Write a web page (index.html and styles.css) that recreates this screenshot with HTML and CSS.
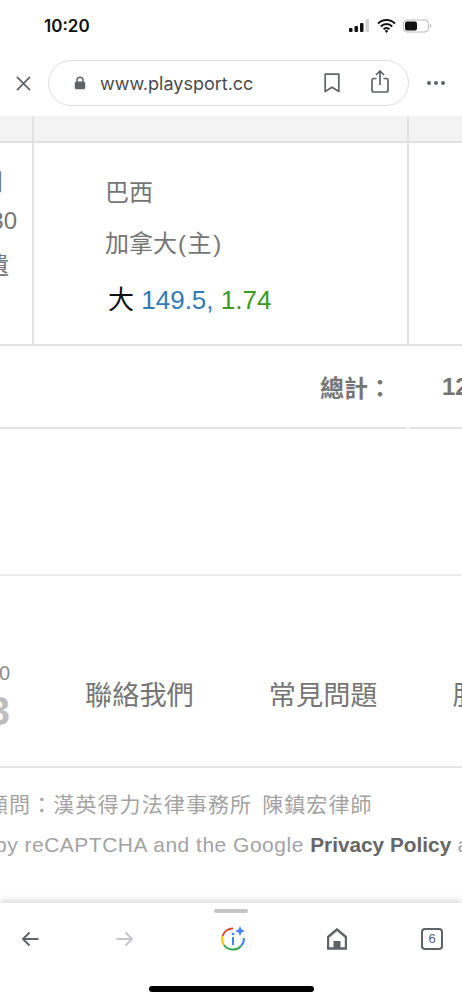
FILE: index.html
```html
<!DOCTYPE html>
<html lang="en">

<head>
  <meta charset="UTF-8">
  <meta name="viewport" content="width=device-width, initial-scale=1.0">
  <title>www.playsport.cc</title>
  <link rel="stylesheet" href="styles.css">
</head>

<body>
  <div class="phone">
    <!-- iOS status bar -->
    <div class="status-bar">
      <span class="clock">10:20</span>
      <div class="status-icons">
        <svg width="21" height="14" viewBox="0 0 21 14">
          <rect x="0" y="9" width="3.5" height="4" rx="1" fill="#111" />
          <rect x="5.5" y="7" width="3.5" height="6" rx="1" fill="#111" />
          <rect x="11" y="4" width="3.5" height="9" rx="1" fill="#111" />
          <rect x="16.5" y="0" width="3.5" height="13" rx="1" fill="#d4d4d4" />
        </svg>
        <svg width="19" height="14" viewBox="0 0 19 14">
          <path d="M1 4.6a12 12 0 0 1 17 0M3.8 7.5a8 8 0 0 1 11.4 0M6.6 10.2a4 4 0 0 1 5.8 0" fill="none" stroke="#111" stroke-width="2" />
          <path d="M9.5 14l-1.8-2.2a2.6 2.6 0 0 1 3.6 0z" fill="#111" />
        </svg>
        <svg width="29" height="14" viewBox="0 0 29 14">
          <rect x="0.5" y="1" width="25" height="12" rx="3.5" fill="none" stroke="#bbb" />
          <rect x="2" y="2.5" width="12" height="9" rx="2" fill="#111" />
          <path d="M27 5v4a2 2 0 0 0 1.2-2A2 2 0 0 0 27 5z" fill="#bbb" />
        </svg>
      </div>
    </div>

    <!-- browser address bar -->
    <div class="address-row">
      <svg class="close-icon" width="15" height="15" viewBox="0 0 16 16">
        <path d="M1 1l14 14M15 1L1 15" stroke="#5f6368" stroke-width="1.8" fill="none" />
      </svg>
      <div class="address-pill">
        <svg width="12" height="14" viewBox="0 0 12 14">
          <path d="M3 6V4.2a3 3 0 0 1 6 0V6" fill="none" stroke="#5f6368" stroke-width="1.5" />
          <rect x="0.8" y="5.5" width="10.4" height="7.8" rx="1.6" fill="#5f6368" />
        </svg>
        <span class="url">www.playsport.cc</span>
        <svg class="bookmark" width="16" height="20" viewBox="0 0 16 20">
          <path d="M1.2 1.2h13.6v17.3L8 14.2l-6.8 4.3z" fill="none" stroke="#5f6368" stroke-width="1.7" stroke-linejoin="round" />
        </svg>
        <svg class="share" width="18" height="23" viewBox="0 0 18 23">
          <path d="M5.5 8.5H3a2 2 0 0 0-2 2V20a2 2 0 0 0 2 2h12a2 2 0 0 0 2-2v-9.500a2 2 0 0 0-2-2h-2.500M9 15V1.500M5 5l4-4 4 4" fill="none" stroke="#5f6368" stroke-width="1.7" />
        </svg>
      </div>
      <div class="more-dots"><i></i><i></i><i></i></div>
    </div>

    <!-- page content, scrolled sideways -->
    <main class="page">
      <div class="table-row table-head">
        <div class="cell-left"></div>
        <div class="cell-mid"></div>
        <div class="cell-right"></div>
      </div>
      <div class="table-row table-body">
        <div class="cell-left clipped">
          <span class="date-line">日</span>
          <span class="time-line">30</span>
          <span class="result-line">遺</span>
        </div>
        <div class="cell-mid game">
          <div class="team">巴西</div>
          <div class="team">加拿大<span class="home-tag">(主)</span></div>
          <div class="odds"><span class="pick">大</span> <span class="line">149.5,</span> <span class="price">1.74</span></div>
        </div>
        <div class="cell-right"></div>
      </div>
      <div class="total-row">
        <span class="total-label">總計：</span>
        <span class="total-num">12</span>
      </div>
      <div class="blank-block"></div>
      <div class="footer-nav">
        <div class="visit-count">
          <span class="visit-small">0</span>
          <span class="visit-big">3</span>
        </div>
        <a class="nav-link">聯絡我們</a>
        <a class="nav-link">常見問題</a>
        <a class="nav-link">服務</a>
      </div>
      <div class="legal">
        <p class="legal-zh">顧問：漢英得力法律事務所 陳鎮宏律師</p>
        <p class="legal-en">by reCAPTCHA and the Google <b>Privacy Policy</b> and</p>
      </div>
    </main>

    <!-- browser bottom toolbar -->
    <footer class="toolbar">
      <div class="handle"></div>
      <div class="toolbar-icons">
        <svg width="18" height="16" viewBox="0 0 18 16">
          <path d="M17.500 8H2M8.500 1.500L2 8l6.500 6.500" fill="none" stroke="#5f6368" stroke-width="2" />
        </svg>
        <svg class="tool-forward" width="18" height="16" viewBox="0 0 18 16">
          <path d="M.5 8H16M9.500 1.500L16 8l-6.500 6.500" fill="none" stroke="#c6c7ca" stroke-width="2" />
        </svg>
        <svg class="tool-lens" width="26" height="26" viewBox="0 0 26 26">
          <path d="M13 2.500A11 11 0 0 0 2.500 10" fill="none" stroke="#ea4335" stroke-width="2" />
          <path d="M2.500 10A11 11 0 0 0 4 19" fill="none" stroke="#fbbc04" stroke-width="2" />
          <path d="M4 19a11 11 0 0 0 17 1" fill="none" stroke="#34a853" stroke-width="2" />
          <path d="M21 20a11 11 0 0 0 3-8" fill="none" stroke="#4285f4" stroke-width="2" />
          <path d="M20 0l1.500 3.500L25 5l-3.500 1.500L20 10l-1.500-3.500L15 5l3.500-1.500z" fill="#4285f4" />
          <rect x="12" y="11" width="2" height="8" fill="#4285f4" />
          <circle cx="13" cy="8" r="1.300" fill="#4285f4" />
        </svg>
        <svg class="tool-home" width="20" height="22" viewBox="0 0 20 22">
          <path d="M10 1.500L1 9v11.500h18V9z" fill="none" stroke="#5f6368" stroke-width="2.400" />
          <rect x="6.500" y="13" width="7" height="8" fill="#5f6368" />
        </svg>
        <div class="tab-count">6</div>
      </div>
      <div class="home-bar"></div>
    </footer>
  </div>
</body>

</html>
```

FILE: styles.css
```css
:root {
  --line-color: #e2e2e2;
  --text-gray: #757575;
  --icon-gray: #5f6368;
}

* {
  margin: 0;
  padding: 0;
  box-sizing: border-box;
}

body {
  background: #fff;
  font-family: "Liberation Sans", "Noto Sans CJK TC", sans-serif;
}

.phone {
  width: 462px;
  height: 1000px;
  display: flex;
  flex-direction: column;
  overflow: hidden;
}

/* status bar */
.status-bar {
  height: 58px;
  padding: 15px 27px 0 44px;
  display: flex;
  justify-content: space-between;
  align-items: flex-start;
}

.clock {
  font-family: Inter, sans-serif;
  font-size: 17px;
  line-height: 22px;
  font-weight: 600;
  color: #111;
}

.status-icons {
  display: flex;
  align-items: center;
  gap: 7px;
  padding: 4px 3px 0 0;
}

/* address bar */
.address-row {
  height: 58px;
  padding: 2px 0 0 16px;
  display: flex;
  align-items: flex-start;
}

.close-icon {
  margin: 16px 17px 0 0;
  flex-shrink: 0;
}

.address-pill {
  width: 361px;
  height: 46px;
  border: 1px solid #dedede;
  border-radius: 23px;
  display: flex;
  align-items: center;
  padding: 0 19px 0 25px;
  flex-shrink: 0;
}

.url {
  font-family: Inter, sans-serif;
  font-size: 18px;
  color: #4a4a4c;
  margin-left: 14px;
  flex: 1;
}

.share {
  margin-left: 31px;
  margin-top: -4px;
}

.more-dots {
  display: flex;
  gap: 3px;
  margin: 21px 0 0 18px;
}

.more-dots i {
  width: 4px;
  height: 4px;
  border-radius: 50%;
  background: var(--icon-gray);
}

/* table */
.page {
  flex: 1;
  overflow: hidden;
}

.table-row {
  display: flex;
}

.cell-left {
  width: 34px;
  border-right: 2px solid var(--line-color);
}

.cell-mid {
  width: 375px;
  border-right: 2px solid var(--line-color);
}

.cell-right {
  flex: 1;
}

.table-head {
  height: 27px;
  background: #f3f3f3;
  border-bottom: 2px solid var(--line-color);
}

.table-body {
  height: 203px;
  border-bottom: 2px solid var(--line-color);
}

.clipped {
  display: flex;
  flex-direction: column;
  align-items: flex-end;
  padding: 24px 15px 0 0;
  gap: 13px;
  overflow: hidden;
  font-size: 24px;
  line-height: 30px;
  color: var(--text-gray);
  white-space: nowrap;
}

.date-line {
  margin-right: 12px;
}

.time-line {
  margin: -4px 0 2px;
}

.result-line {
  margin-right: 8px;
}

.game {
  padding: 32px 0 0 71px;
  font-size: 24px;
  line-height: 36px;
  color: var(--text-gray);
}

.team {
  margin-bottom: 15px;
}

.home-tag {
  letter-spacing: 1.6px;
  margin-left: 1px;
}

.odds {
  margin: 20px 0 0 3px;
  font-size: 26px;
}

.pick {
  color: #111;
}

.line {
  color: #337ab7;
}

.price {
  color: #3c9a23;
}

.total-row {
  position: relative;
  height: 83px;
  border-bottom: 2px solid var(--line-color);
  display: flex;
  align-items: center;
  padding: 0 0 0 320px;
  font-size: 24px;
  font-weight: 700;
  color: var(--text-gray);
  white-space: nowrap;
}

/* the rule breaks where the next column starts */
.total-row::after {
  content: '';
  position: absolute;
  left: 407px;
  bottom: -2px;
  width: 2px;
  height: 2px;
  background: #fff;
}

.total-num {
  margin-left: 50px;
}

.blank-block {
  height: 147px;
  border-bottom: 2px solid #ececec;
}

/* footer links */
.footer-nav {
  height: 192px;
  border-bottom: 2px solid #e4e4e4;
  display: flex;
  align-items: flex-start;
  padding-top: 103px;
  white-space: nowrap;
}

.visit-count {
  width: 10px;
  flex-shrink: 0;
  margin-top: -16px;
  display: flex;
  flex-direction: column;
  align-items: flex-end;
  line-height: 1;
  overflow: hidden;
}

.visit-small {
  font-size: 20px;
  color: #8c8c8c;
  margin-bottom: 8px;
}

.visit-big {
  font-size: 40px;
  font-weight: 700;
  color: #bdbdbd;
}

.nav-link {
  font-size: 27.200px;
  line-height: 34px;
  color: var(--text-gray);
  margin-left: 75px;
  flex-shrink: 0;
}

.legal {
  padding-top: 17px;
  font-size: 21px;
  line-height: 40px;
  color: #a3a3a3;
  white-space: nowrap;
}

.legal-zh {
  margin-left: -13px;
  letter-spacing: 1.1px;
  word-spacing: 3px;
}

.legal-en {
  margin-left: -5px;
  letter-spacing: 0.5px;
}

.legal-en b {
  color: #666;
  letter-spacing: 0;
  font-size: 20.800px;
}

/* bottom toolbar */
.toolbar {
  height: 97px;
  background: #fff;
  box-shadow: 0 -3px 6px rgba(0, 0, 0, 0.14);
  position: relative;
  flex-shrink: 0;
}

.handle {
  width: 34px;
  height: 4px;
  margin: 6px auto 0;
  border-radius: 2px;
  background: #c4c5c8;
}

.toolbar-icons {
  display: flex;
  align-items: center;
  padding: 13px 0 0 21px;
}

.tool-forward {
  margin-left: 77px;
}

.tool-lens {
  margin-left: 86px;
}

.tool-home {
  margin-left: 81px;
}

.tab-count {
  margin-left: 74px;
  width: 22px;
  height: 22px;
  border: 2px solid var(--icon-gray);
  border-radius: 4px;
  font-size: 13px;
  line-height: 18px;
  text-align: center;
  color: var(--icon-gray);
}

.home-bar {
  width: 165px;
  height: 6px;
  margin: 34px auto 0;
  border-radius: 3px;
  background: #000;
}
```
